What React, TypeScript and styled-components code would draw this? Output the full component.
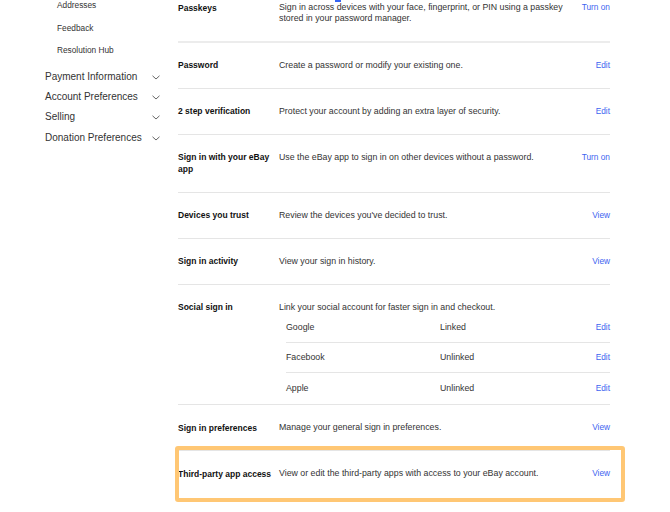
import React from "react";
import styled, { createGlobalStyle } from "styled-components";

const GlobalStyle = createGlobalStyle`
  html, body {
    margin: 0;
    padding: 0;
    background: #ffffff;
    overflow: hidden;
  }
  body {
    font-family: "Liberation Sans", Arial, sans-serif;
    font-size: 8.5px;
    color: #333;
  }
`;

type Row = {
  label: string;
  text: string;
  action: string;
  accounts?: { name: string; status: string }[];
  highlight?: boolean;
};

const rows: Row[] = [
  {
    label: "Passkeys",
    text: "Sign in across devices with your face, fingerprint, or PIN using a passkey stored in your password manager.",
    action: "Turn on",
  },
  { label: "Password", text: "Create a password or modify your existing one.", action: "Edit" },
  { label: "2 step verification", text: "Protect your account by adding an extra layer of security.", action: "Edit" },
  {
    label: "Sign in with your eBay app",
    text: "Use the eBay app to sign in on other devices without a password.",
    action: "Turn on",
  },
  { label: "Devices you trust", text: "Review the devices you've decided to trust.", action: "View" },
  { label: "Sign in activity", text: "View your sign in history.", action: "View" },
  {
    label: "Social sign in",
    text: "Link your social account for faster sign in and checkout.",
    action: "",
    accounts: [
      { name: "Google", status: "Linked" },
      { name: "Facebook", status: "Unlinked" },
      { name: "Apple", status: "Unlinked" },
    ],
  },
  { label: "Sign in preferences", text: "Manage your general sign in preferences.", action: "View" },
  {
    label: "Third-party app access",
    text: "View or edit the third-party apps with access to your eBay account.",
    action: "View",
    highlight: true,
  },
];

const subLinks = ["Addresses", "Feedback", "Resolution Hub"];
const sections = ["Payment Information", "Account Preferences", "Selling", "Donation Preferences"];

const Chevron = () => (
  <svg width="8" height="5" viewBox="0 0 8 5" fill="none">
    <polyline points="0.5,0.8 4,4 7.5,0.8" stroke="#666" strokeWidth="1" />
  </svg>
);

export default function App() {
  return (
    <>
      <GlobalStyle />
      <Page>
        <Sidebar>
          <SubList>
            {subLinks.map((s) => (
              <SubLink key={s}>{s}</SubLink>
            ))}
          </SubList>
          <SectionList>
            {sections.map((s) => (
              <SectionItem key={s}>
                <span>{s}</span>
                <Chevron />
              </SectionItem>
            ))}
          </SectionList>
        </Sidebar>
        <Main>
          <FocusMark />
          {rows.map((r, i) => (
            <SettingRow key={r.label} $first={i === 0} $last={i === rows.length - 1}>
              {r.highlight && <Highlight />}
              <Label>{r.label}</Label>
              <Body>
                <Description>{r.text}</Description>
                {r.accounts && (
                  <Accounts>
                    {r.accounts.map((a) => (
                      <AccountRow key={a.name}>
                        <AccountName>{a.name}</AccountName>
                        <AccountStatus>{a.status}</AccountStatus>
                        <AccountAction>Edit</AccountAction>
                      </AccountRow>
                    ))}
                  </Accounts>
                )}
              </Body>
              <Action>{r.action}</Action>
            </SettingRow>
          ))}
        </Main>
      </Page>
    </>
  );
}

const Page = styled.div`
  display: flex;
  width: 670px;
  height: 512px;
`;

const Sidebar = styled.aside`
  width: 115px;
  padding-left: 45px;
  margin-right: 18px;
  display: flex;
  flex-direction: column;
`;

const SubList = styled.ul`
  list-style: none;
  margin: 0;
  padding: 0 0 0 12px;
  display: flex;
  flex-direction: column;
  gap: 11.5px;
  font-size: 8.3px;
`;

const SubLink = styled.li`
  line-height: 11px;
  color: #333;
`;

const SectionList = styled.ul`
  list-style: none;
  margin: 10px 0 0;
  padding: 0;
  font-size: 10px;
`;

const SectionItem = styled.li`
  height: 20.4px;
  display: flex;
  align-items: center;
  justify-content: space-between;
  color: #333;
  svg {
    margin-top: 2px;
  }
`;

const Main = styled.main`
  position: relative;
  width: 432px;
  margin-top: -15px;
`;

const FocusMark = styled.div`
  position: absolute;
  left: 157px;
  top: 15px;
  width: 6px;
  height: 2px;
  background: #3665f3;
`;

const SettingRow = styled.div<{ $first: boolean; $last: boolean }>`
  position: relative;
  display: flex;
  align-items: flex-start;
  padding: 16.5px 0;
  border-bottom: ${({ $first, $last }) =>
    $last ? "none" : $first ? "2px solid #ececec" : "1px solid #e5e5e5"};
  line-height: 11px;
`;

const Highlight = styled.div`
  position: absolute;
  left: -3px;
  right: -15px;
  top: -5px;
  bottom: -6px;
  border: 4px solid #ffc774;
  border-radius: 3px;
  pointer-events: none;
`;

const Label = styled.div`
  width: 96px;
  margin-right: 5px;
  flex-shrink: 0;
  font-size: 8.5px;
  line-height: 12px;
  font-weight: 700;
  color: #111;
`;

const Body = styled.div`
  flex: 1;
  min-width: 0;
  font-size: 8.8px;
  padding-top: 0.5px;
`;

const Description = styled.div`
  color: #333;
  padding-right: 4px;
`;

const Action = styled.div`
  width: 35px;
  flex-shrink: 0;
  text-align: right;
  font-size: 8.3px;
  color: #3e64f0;
  padding-top: 0.5px;
`;

const Accounts = styled.div`
  margin: 0.5px -35px -15.5px 7px;
`;

const AccountRow = styled.div`
  box-sizing: border-box;
  display: flex;
  align-items: center;
  height: 30px;
  border-bottom: 1px solid #e5e5e5;
  &:last-child {
    border-bottom: none;
  }
`;

const AccountName = styled.div`
  width: 154px;
  color: #333;
`;

const AccountStatus = styled.div`
  flex: 1;
  color: #333;
`;

const AccountAction = styled.div`
  font-size: 8.3px;
  color: #3e64f0;
`;
